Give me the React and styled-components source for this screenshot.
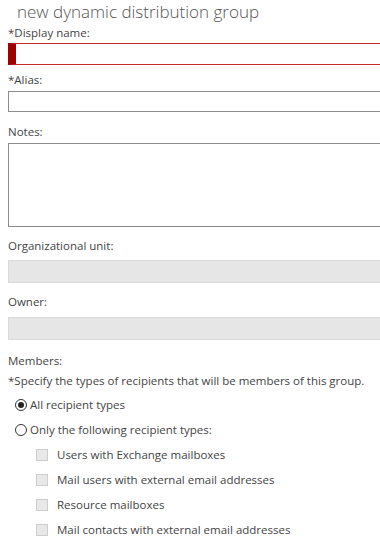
import React from "react";
import styled, { createGlobalStyle } from "styled-components";

const Global = createGlobalStyle`
  html, body { margin: 0; padding: 0; background: #fff; overflow: hidden; }
  body { font-family: "Segoe UI", "Open Sans", "Noto Sans", sans-serif; color: #3b3b3b; }
  * { box-sizing: border-box; }
`;

const Page = styled.div`
  width: 380px;
  height: 543px;
  overflow: hidden;
  padding-left: 8px;
  display: flex;
  flex-direction: column;
`;

const Title = styled.h1`
  margin: 0 0 1px 9px;
  font-size: 17px;
  line-height: 24px;
  font-weight: 300;
  color: #555;
  white-space: nowrap;
`;

const Label = styled.div`
  font-size: 11.5px;
  line-height: 16px;
  color: #444;
  margin-top: ${p => p.$mt || 0}px;
  margin-bottom: ${p => p.$mb || 3}px;
  white-space: nowrap;
`;

const TextBox = styled.div`
  width: 390px;
  height: ${p => p.$h || 22}px;
  flex: none;
  background: ${p => (p.$disabled ? "#e6e6e6" : "#fff")};
  border: 1px solid ${p => (p.$error ? "#c42b2f" : p.$disabled ? "#dadada" : "#8c8c8c")};
  border-left: ${p => (p.$error ? "8px solid #a10000" : undefined)};
`;

const Row = styled.div`
  display: flex;
  align-items: center;
  height: 25px;
  padding-left: ${p => p.$indent}px;
  font-size: 11.5px;
  color: #444;
  white-space: nowrap;
`;

const Radio = styled.span`
  width: 12px;
  height: 12px;
  border-radius: 50%;
  border: 1px solid #333;
  margin-right: 3px;
  display: flex;
  align-items: center;
  justify-content: center;
  flex: none;
  &::after {
    content: "";
    width: 6px;
    height: 6px;
    border-radius: 50%;
    background: ${p => (p.$checked ? "#222" : "transparent")};
  }
`;

const Check = styled.span`
  width: 12px;
  height: 12px;
  background: #e8e8e8;
  border: 1px solid #cdcdcd;
  margin-right: 9px;
  flex: none;
`;

const types = [
  "Users with Exchange mailboxes",
  "Mail users with external email addresses",
  "Resource mailboxes",
  "Mail contacts with external email addresses",
];

export default function App() {
  return (
    <Page>
      <Global />
      <Title>new dynamic distribution group</Title>
      <Label $mb={2}>*Display name:</Label>
      <TextBox $error $h={22} />
      <Label $mt={7}>*Alias:</Label>
      <TextBox $h={21} />
      <Label $mt={12}>Notes:</Label>
      <TextBox $h={84} />
      <Label $mt={11} $mb={6}>Organizational unit:</Label>
      <TextBox $disabled $h={23} />
      <Label $mt={11} $mb={7}>Owner:</Label>
      <TextBox $disabled $h={23} />
      <Label $mt={13} $mb={4}>Members:</Label>
      <Label $mb={3}>*Specify the types of recipients that will be members of this group.</Label>
      <Row $indent={7}><Radio $checked />All recipient types</Row>
      <Row $indent={7}><Radio />Only the following recipient types:</Row>
      {types.map(t => (
        <Row key={t} $indent={28}><Check />{t}</Row>
      ))}
    </Page>
  );
}
